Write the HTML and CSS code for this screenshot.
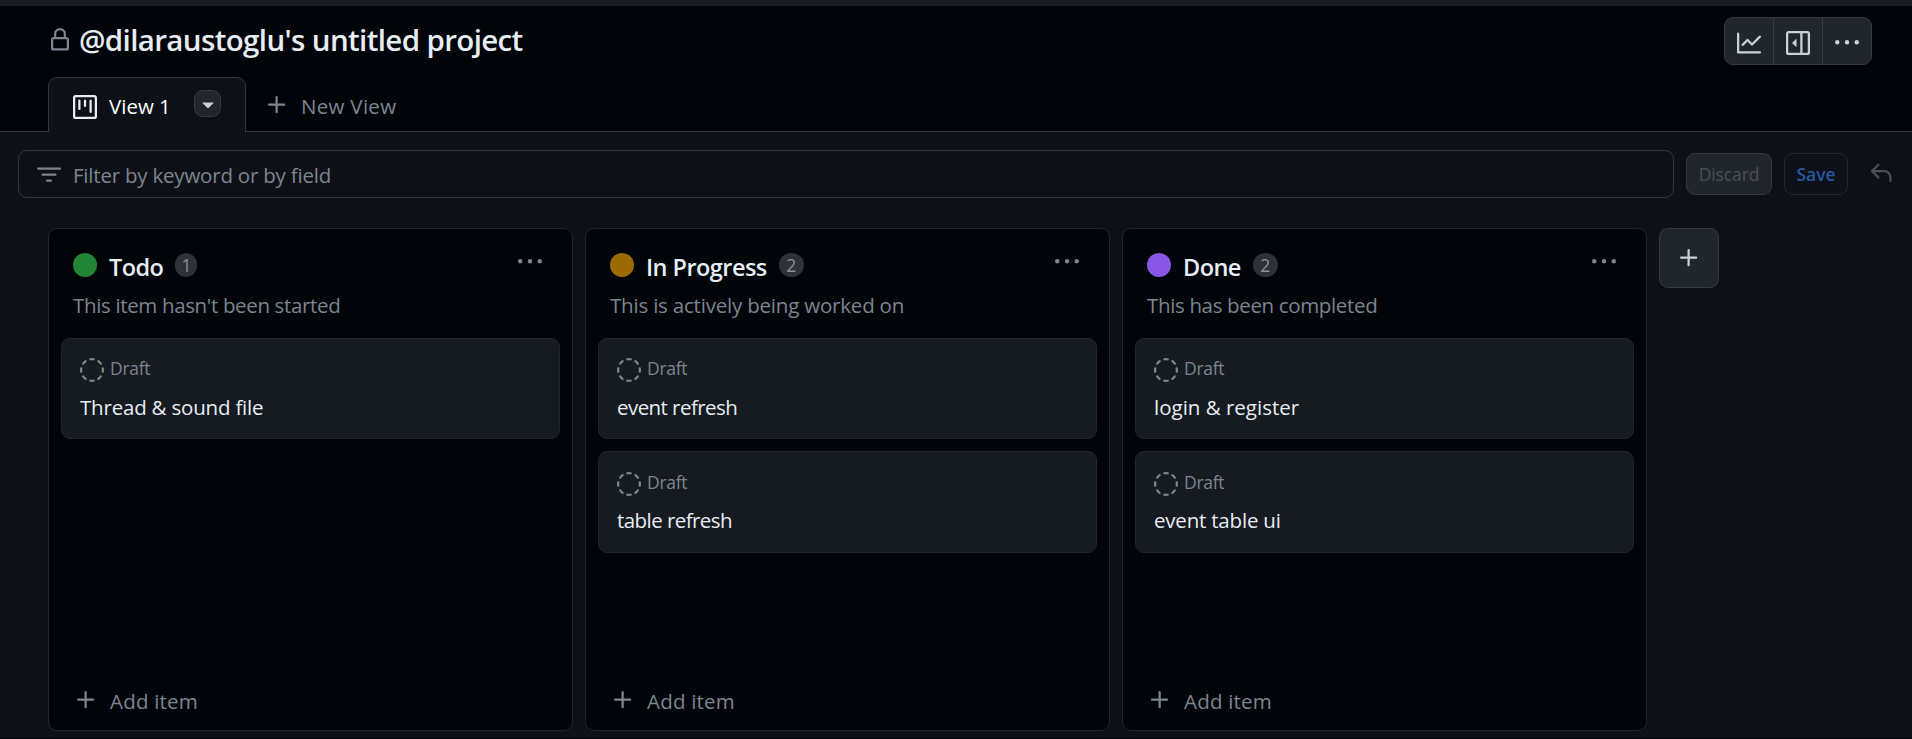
FILE: index.html
```html
<!DOCTYPE html>
<html lang="en">
<head>
<meta charset="utf-8">
<title>@dilaraustoglu's untitled project</title>
<link rel="stylesheet" href="styles.css">
</head>
<body>
<svg class="sprite" aria-hidden="true">
  <symbol id="lock" viewBox="0 0 16 16"><path d="M4 4a4 4 0 0 1 8 0v2h.25c.966 0 1.75.784 1.75 1.75v5.5A1.75 1.75 0 0 1 12.25 15h-8.5A1.75 1.75 0 0 1 2 13.25v-5.5C2 6.784 2.784 6 3.75 6H4Zm8.25 3.5h-8.5a.25.25 0 0 0-.25.25v5.5c0 .138.112.25.25.25h8.5a.25.25 0 0 0 .25-.25v-5.5a.25.25 0 0 0-.25-.25ZM10.5 6V4a2.5 2.5 0 1 0-5 0v2Z"/></symbol>
  <symbol id="project" viewBox="0 0 16 16"><path d="M1.75 0h12.5C15.216 0 16 .784 16 1.75v12.5A1.75 1.75 0 0 1 14.25 16H1.75A1.75 1.75 0 0 1 0 14.25V1.75C0 .784.784 0 1.75 0ZM1.5 1.75v12.5c0 .138.112.25.25.25h12.5a.25.25 0 0 0 .25-.25V1.75a.25.25 0 0 0-.25-.25H1.75a.25.25 0 0 0-.25.25ZM11.75 3a.75.75 0 0 1 .75.75v7.5a.75.75 0 0 1-1.5 0v-7.5a.75.75 0 0 1 .75-.75Zm-8.25.75a.75.75 0 0 1 1.5 0v5.5a.75.75 0 0 1-1.5 0ZM8 3a.75.75 0 0 1 .75.75v3.5a.75.75 0 0 1-1.5 0v-3.5A.75.75 0 0 1 8 3Z"/></symbol>
  <symbol id="caret" viewBox="0 0 16 16"><path d="m4.427 7.427 3.396 3.396a.25.25 0 0 0 .354 0l3.396-3.396A.25.25 0 0 0 11.396 7H4.604a.25.25 0 0 0-.177.427Z"/></symbol>
  <symbol id="plus" viewBox="0 0 16 16"><path d="M7.75 2a.75.75 0 0 1 .75.75V7h4.25a.75.75 0 0 1 0 1.5H8.5v4.25a.75.75 0 0 1-1.5 0V8.5H2.75a.75.75 0 0 1 0-1.5H7V2.75A.75.75 0 0 1 7.75 2Z"/></symbol>
  <symbol id="filter" viewBox="0 0 16 16"><path d="M.75 3h14.5a.75.75 0 0 1 0 1.5H.75a.75.75 0 0 1 0-1.5ZM3 7.75A.75.75 0 0 1 3.75 7h8.5a.75.75 0 0 1 0 1.5h-8.5A.75.75 0 0 1 3 7.75Zm3 4a.75.75 0 0 1 .75-.75h2.5a.75.75 0 0 1 0 1.5h-2.5a.75.75 0 0 1-.75-.75Z"/></symbol>
  <symbol id="graph" viewBox="0 0 16 16"><path d="M1.5 1.75V13.5h13.75a.75.75 0 0 1 0 1.5H.75a.75.75 0 0 1-.75-.75V1.75a.75.75 0 0 1 1.5 0Zm14.28 2.53-5.25 5.25a.75.75 0 0 1-1.06 0L7 7.06 4.28 9.78a.751.751 0 0 1-1.06-1.06l3.25-3.25a.75.75 0 0 1 1.06 0L10 7.94l4.72-4.72a.751.751 0 0 1 1.06 1.06Z"/></symbol>
  <symbol id="sidebar" viewBox="0 0 16 16"><path d="m4.177 7.823 2.396-2.396A.25.25 0 0 1 7 5.604v4.792a.25.25 0 0 1-.427.177L4.177 8.177a.25.25 0 0 1 0-.354Z"/><path d="M0 1.75C0 .784.784 0 1.75 0h12.5C15.216 0 16 .784 16 1.75v12.5A1.75 1.75 0 0 1 14.25 16H1.75A1.75 1.75 0 0 1 0 14.25Zm1.75-.25a.25.25 0 0 0-.25.25v12.5c0 .138.112.25.25.25H9.5v-13Zm12.5 13a.25.25 0 0 0 .25-.25V1.75a.25.25 0 0 0-.25-.25H11v13Z"/></symbol>
  <symbol id="dots" viewBox="0 0 16 16"><path d="M8 9a1.5 1.5 0 1 0 0-3 1.5 1.5 0 0 0 0 3ZM1.5 9a1.5 1.5 0 1 0 0-3 1.5 1.5 0 0 0 0 3Zm13 0a1.5 1.5 0 1 0 0-3 1.5 1.5 0 0 0 0 3Z"/></symbol>
  <symbol id="undo" viewBox="0 0 16 16"><path d="M6.78 1.97a.75.75 0 0 1 0 1.06L3.81 6h6.44A4.75 4.75 0 0 1 15 10.75v2.5a.75.75 0 0 1-1.5 0v-2.5a3.25 3.25 0 0 0-3.25-3.25H3.81l2.97 2.97a.749.749 0 1 1-1.06 1.06L1.47 7.28a.75.75 0 0 1 0-1.06l4.25-4.25a.75.75 0 0 1 1.06 0Z"/></symbol>
  <symbol id="draft" viewBox="0 0 16 16"><path d="M14.307 11.655a.75.75 0 0 1 .165 1.048 8.05 8.05 0 0 1-1.769 1.77.75.75 0 0 1-.883-1.214 6.552 6.552 0 0 0 1.44-1.439.75.75 0 0 1 1.047-.165Zm-2.652-9.962a.75.75 0 0 1 1.048-.165 8.05 8.05 0 0 1 1.77 1.769.75.75 0 0 1-1.214.883 6.552 6.552 0 0 0-1.439-1.44.75.75 0 0 1-.165-1.047ZM6.749.097a8.074 8.074 0 0 1 2.502 0 .75.75 0 1 1-.233 1.482 6.558 6.558 0 0 0-2.036 0A.751.751 0 0 1 6.749.097ZM.955 6.125a.75.75 0 0 1 .624.857 6.558 6.558 0 0 0 0 2.036.75.75 0 1 1-1.482.233 8.074 8.074 0 0 1 0-2.502.75.75 0 0 1 .858-.624Zm14.09 0a.75.75 0 0 1 .858.624c.13.829.13 1.673 0 2.502a.75.75 0 1 1-1.482-.233 6.558 6.558 0 0 0 0-2.036.75.75 0 0 1 .624-.857Zm-8.92 8.92a.75.75 0 0 1 .857-.624 6.558 6.558 0 0 0 2.036 0 .75.75 0 1 1 .233 1.482c-.829.13-1.673.13-2.502 0a.75.75 0 0 1-.624-.858Zm-4.432-3.39a.75.75 0 0 1 1.048.165 6.552 6.552 0 0 0 1.439 1.44.751.751 0 0 1-.883 1.212 8.05 8.05 0 0 1-1.77-1.769.75.75 0 0 1 .166-1.048Zm2.652-9.962A.75.75 0 0 1 4.18 2.741a6.556 6.556 0 0 0-1.44 1.439.751.751 0 0 1-1.212-.883 8.05 8.05 0 0 1 1.769-1.77.75.75 0 0 1 1.048.166Z"/></symbol>
</svg>

<div class="topbar"></div>
<header class="header">
  <svg class="icon header-lock"><use href="#lock"/></svg>
  <h1 class="header-title">@dilaraustoglu's untitled project</h1>
  <div class="button-group">
    <button class="group-button"><svg class="icon"><use href="#graph"/></svg></button>
    <button class="group-button"><svg class="icon"><use href="#sidebar"/></svg></button>
    <button class="group-button"><svg class="icon"><use href="#dots"/></svg></button>
  </div>
</header>

<nav class="tabs">
  <div class="tab">
    <svg class="icon"><use href="#project"/></svg>
    <span class="tab-label">View 1</span>
    <button class="tab-menu"><svg class="icon"><use href="#caret"/></svg></button>
  </div>
  <div class="new-view">
    <svg class="icon"><use href="#plus"/></svg>
    <span class="new-view-label">New View</span>
  </div>
</nav>

<div class="toolbar">
  <div class="filter">
    <svg class="icon"><use href="#filter"/></svg>
    <span class="filter-text">Filter by keyword or by field</span>
  </div>
  <button class="button discard"><span>Discard</span></button>
  <button class="button save"><span>Save</span></button>
  <svg class="icon undo"><use href="#undo"/></svg>
</div>

<main class="board">
  <section class="column">
    <div class="column-head">
      <span class="dot dot-green"></span>
      <h2 class="column-title">Todo</h2>
      <span class="count count-one">1</span>
      <svg class="icon column-menu"><use href="#dots"/></svg>
    </div>
    <p class="column-note note-tight">This item hasn't been started</p>
    <div class="cards">
      <article class="card">
        <div class="card-meta"><svg class="icon"><use href="#draft"/></svg><span>Draft</span></div>
        <div class="card-title">Thread &amp; sound file</div>
      </article>
    </div>
    <div class="add-item"><svg class="icon"><use href="#plus"/></svg><span>Add item</span></div>
  </section>

  <section class="column">
    <div class="column-head">
      <span class="dot dot-amber"></span>
      <h2 class="column-title">In Progress</h2>
      <span class="count">2</span>
      <svg class="icon column-menu"><use href="#dots"/></svg>
    </div>
    <p class="column-note">This is actively being worked on</p>
    <div class="cards">
      <article class="card">
        <div class="card-meta"><svg class="icon"><use href="#draft"/></svg><span>Draft</span></div>
        <div class="card-title title-tight">event refresh</div>
      </article>
      <article class="card">
        <div class="card-meta"><svg class="icon"><use href="#draft"/></svg><span>Draft</span></div>
        <div class="card-title title-tight">table refresh</div>
      </article>
    </div>
    <div class="add-item"><svg class="icon"><use href="#plus"/></svg><span>Add item</span></div>
  </section>

  <section class="column">
    <div class="column-head">
      <span class="dot dot-purple"></span>
      <h2 class="column-title">Done</h2>
      <span class="count">2</span>
      <svg class="icon column-menu"><use href="#dots"/></svg>
    </div>
    <p class="column-note note-tight">This has been completed</p>
    <div class="cards">
      <article class="card">
        <div class="card-meta"><svg class="icon"><use href="#draft"/></svg><span>Draft</span></div>
        <div class="card-title title-wide">login &amp; register</div>
      </article>
      <article class="card">
        <div class="card-meta"><svg class="icon"><use href="#draft"/></svg><span>Draft</span></div>
        <div class="card-title">event table ui</div>
      </article>
    </div>
    <div class="add-item"><svg class="icon"><use href="#plus"/></svg><span>Add item</span></div>
  </section>

  <button class="add-column"><svg class="icon"><use href="#plus"/></svg></button>
</main>
</body>
</html>
```

FILE: styles.css
```css
* { box-sizing: border-box; }

body {
  margin: 0;
  width: 1912px;
  height: 739px;
  overflow: hidden;
  display: flex;
  flex-direction: column;
  background: #0d1117;
  color: #e6edf3;
  font-family: "Open Sans", "Noto Sans", sans-serif;
  font-size: 20.5px;
  white-space: nowrap;
}

h1, h2, p { margin: 0; }
button { font: inherit; padding: 0; }

.sprite { display: none; }
.icon { width: 24px; height: 24px; flex: none; fill: currentColor; display: block; }

.topbar { height: 6px; background: #161b22; flex: none; }

.header {
  height: 71px;
  flex: none;
  display: flex;
  align-items: flex-start;
  padding: 11px 40px 0 48px;
  background: #010409;
}
.header-lock { margin-top: 11px; color: #7d8590; }
.header-title {
  margin-left: 7px;
  font-size: 29.5px;
  line-height: 46px;
  font-weight: 600;
  letter-spacing: -0.63px;
}
.button-group {
  margin-left: auto;
  display: flex;
  width: 148px;
  height: 48px;
  border: 1px solid #363b42;
  border-radius: 9px;
  background: #21262d;
  overflow: hidden;
}
.group-button {
  flex: 1;
  display: flex;
  align-items: center;
  justify-content: center;
  padding-top: 3px;
  border: 0;
  border-right: 1px solid #363b42;
  background: none;
  color: #c9d1d9;
}
.group-button:last-child { border-right: 0; }

.tabs {
  height: 55px;
  flex: none;
  display: flex;
  padding-left: 48px;
  background: #010409;
  box-shadow: inset 0 -1px #30363d;
}
.tab {
  width: 198px;
  height: 55px;
  display: flex;
  align-items: flex-start;
  padding: 17px 0 0 24px;
  border: 1px solid #30363d;
  border-bottom: 0;
  border-radius: 9px 9px 0 0;
  background: #0d1117;
}
.tab-label { margin-left: 12px; width: 60px; line-height: 22px; color: #fff; letter-spacing: 0; }
.tab-menu {
  margin: -5px 0 0 25px;
  width: 27px;
  height: 27px;
  display: flex;
  align-items: center;
  justify-content: center;
  border: 1px solid #363b42;
  border-radius: 9px;
  background: #21262d;
  color: #c9d1d9;
}
.new-view { display: flex; padding: 16px 0 0 19px; color: #7d8590; }
.new-view-label { margin-left: 12px; line-height: 26px; letter-spacing: 0.3px; }

.toolbar {
  height: 96px;
  flex: none;
  display: flex;
  align-items: flex-start;
  padding: 18px 18px 0;
}
.filter {
  width: 1656px;
  height: 48px;
  display: flex;
  align-items: center;
  padding: 2px 0 0 18px;
  border: 1px solid #30363d;
  border-radius: 9px;
  color: #7d8590;
}
.filter-text { margin-left: 12px; letter-spacing: -0.21px; }
.button {
  height: 42px;
  margin: 3px 0 0 12px;
  border: 1px solid #363b42;
  border-radius: 9px;
  font-size: 17.5px;
  letter-spacing: -0.1px;
}
.discard { width: 86px; background: #21262d; color: #484f58; }
.save { width: 64px; background: #0d1117; border-color: #21262d; color: #275aa0; font-weight: 600; }
.undo { margin: 11px 0 0 21px; color: #484f58; }

.board {
  flex: 1;
  display: flex;
  align-items: flex-start;
  gap: 12px;
  padding-left: 48px;
  box-shadow: inset 0 -1px #010409;
}
.column {
  width: 525px;
  height: 503px;
  display: flex;
  flex-direction: column;
  padding: 0 12px;
  border: 1px solid #21262d;
  border-radius: 9px;
  background: #010409;
}
.column-head { height: 60px; display: flex; align-items: flex-start; padding: 24px 18px 0 12px; }
.dot { width: 24px; height: 24px; border-radius: 50%; }
.dot-green { background: #238636; }
.dot-amber { background: #9e6a03; }
.dot-purple { background: #8957e5; }
.column-title { margin-left: 12px; font-size: 23.5px; line-height: 28px; font-weight: 600; letter-spacing: -0.55px; }
.count {
  margin-left: 12px;
  width: 25px;
  height: 24px;
  border-radius: 12px;
  background: #2d3139;
  color: #8b929c;
  font-size: 17.5px;
  font-weight: 500;
  line-height: 24px;
  text-align: center;
}
.count-one { width: 22px; }
.column-menu { margin: -3px 0 0 auto; color: #7d8590; }
.column-note { height: 34px; padding-left: 12px; line-height: 32px; color: #7d8590; letter-spacing: -0.2px; }
.note-tight { letter-spacing: -0.35px; }

.cards { flex: 1; display: flex; flex-direction: column; gap: 12px; padding-top: 15px; }
.card {
  height: 101px;
  padding: 18px;
  border: 1px solid #21262d;
  border-radius: 9px;
  background: #161b22;
}
.card + .card { height: 102px; padding-top: 19px; }
.card-meta { display: flex; height: 26px; padding-top: 1px; color: #7d8590; font-size: 17.5px; line-height: 20px; letter-spacing: -0.3px; }
.card-meta span { margin-left: 6px; }
.card-title { margin-top: 9px; line-height: 30px; letter-spacing: -0.2px; }
.card + .card .card-title { margin-top: 8px; }
.title-tight { letter-spacing: -0.56px; }
.title-wide { letter-spacing: 0; }

.add-item { display: flex; height: 60px; padding: 18px 13px; color: #7d8590; line-height: 26px; }
.add-item span { margin-left: 12px; letter-spacing: 0.2px; }

.add-column {
  width: 60px;
  height: 60px;
  display: flex;
  align-items: center;
  justify-content: center;
  border: 1px solid #363b42;
  border-radius: 9px;
  background: #21262d;
  color: #c9d1d9;
}
```
